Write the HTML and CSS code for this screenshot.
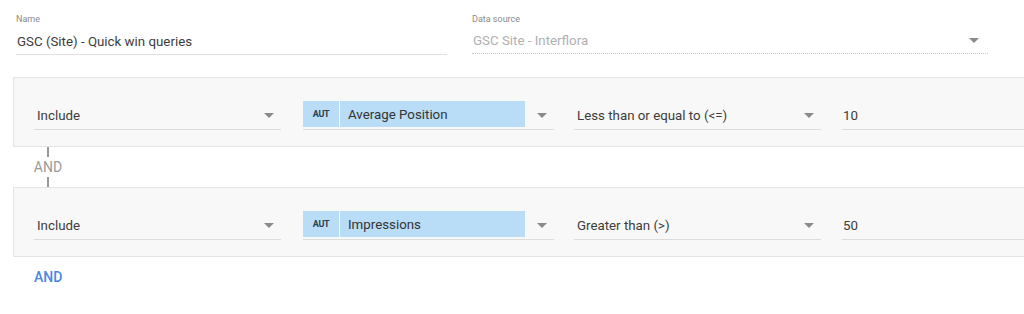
FILE: index.html
```html
<!DOCTYPE html>
<html lang="en">
<head>
    <meta charset="UTF-8">
    <title>Filter editor</title>
    <link rel="stylesheet" href="styles.css">
</head>
<body>
    <div class="header">
        <div class="field name-field">
            <div class="field-label">Name</div>
            <div class="field-value">GSC (Site) - Quick win queries</div>
        </div>
        <div class="field source-field">
            <div class="field-label">Data source</div>
            <div class="field-value disabled">
                <span>GSC Site - Interflora</span>
                <span class="arrow"></span>
            </div>
        </div>
    </div>

    <div class="clause">
        <div class="select mode"><span>Include</span><span class="arrow"></span></div>
        <div class="select dimension">
            <span class="chip"><span class="chip-type">AUT</span><span class="chip-name">Average Position</span></span>
            <span class="arrow"></span>
        </div>
        <div class="select operator"><span>Less than or equal to (&lt;=)</span><span class="arrow"></span></div>
        <div class="select value"><span>10</span></div>
    </div>

    <div class="connector">
        <span class="tick"></span>
        <span class="connector-text">AND</span>
        <span class="tick"></span>
    </div>

    <div class="clause">
        <div class="select mode"><span>Include</span><span class="arrow"></span></div>
        <div class="select dimension">
            <span class="chip"><span class="chip-type">AUT</span><span class="chip-name">Impressions</span></span>
            <span class="arrow"></span>
        </div>
        <div class="select operator"><span>Greater than (&gt;)</span><span class="arrow"></span></div>
        <div class="select value"><span>50</span></div>
    </div>

    <div class="add-and">AND</div>
</body>
</html>
```

FILE: styles.css
```css
body {
    font-family: Roboto, "Noto Sans", sans-serif;
    background-color: #fff;
    color: #3c3c3c;
    margin: 0;
    padding: 0;
    overflow: hidden;
}

.header {
    display: flex;
    padding: 13px 0 0 16px;
}

.field-label {
    font-size: 9px;
    color: #8a8a8a;
    height: 12px;
    line-height: 12px;
}

.field-value {
    display: flex;
    align-items: center;
    justify-content: space-between;
    height: 30px;
    padding-top: 3px;
    font-size: 13.3px;
    padding-left: 1px;
    border-bottom: 1px solid #e0e0e0;
    box-sizing: border-box;
}

.name-field {
    width: 431px;
}

.source-field {
    width: 516px;
    margin-left: 25px;
}

.field-value.disabled {
    color: #b0b0b0;
    border-bottom: 1px dotted #c8c8c8;
    height: 29px;
}

.field-value.disabled .arrow {
    margin-right: 9px;
}

.arrow {
    width: 0;
    height: 0;
    border-left: 5px solid transparent;
    border-right: 5px solid transparent;
    border-top: 5px solid #8a8a8a;
}

.clause {
    display: flex;
    margin: 22px -20px 0 13px;
    padding: 23px 0 16px 20px;
    background-color: #f8f8f8;
    border: 1px solid #e4e4e4;
}

.clause + .connector + .clause {
    margin-top: 0;
}

.select {
    display: flex;
    align-items: center;
    justify-content: space-between;
    height: 28px;
    font-size: 13.3px;
    color: #3c3c3c;
    border-bottom: 1px solid #dcdcdc;
    padding-left: 3px;
    box-sizing: content-box;
}

.select .arrow {
    margin-right: 7px;
}

.mode {
    width: 244px;
}

.dimension {
    width: 251px;
    margin-left: 22px;
    padding-left: 0;
}

.operator {
    width: 244px;
    margin-left: 20px;
}

.value {
    flex: 1;
    margin-left: 21px;
    padding-left: 1px;
}

.chip {
    display: flex;
    height: 26px;
    margin-bottom: 2px;
}

.chip-type {
    width: 36px;
    background-color: #b9dcf7;
    font-size: 9px;
    font-weight: bold;
    letter-spacing: -0.3px;
    color: #2c3e50;
    display: flex;
    align-items: center;
    justify-content: center;
    margin-right: 1px;
}

.chip-name {
    width: 177px;
    background-color: #b9dcf7;
    display: flex;
    align-items: center;
    padding-left: 8px;
    color: #333;
}

.connector {
    display: flex;
    flex-direction: column;
    align-items: center;
    width: 28px;
    margin-left: 34px;
    height: 40px;
}

.tick {
    width: 2px;
    height: 10px;
    background-color: #9a9a9a;
}

.connector-text {
    font-size: 14px;
    color: #9a9a9a;
    height: 20px;
    line-height: 20px;
}

.add-and {
    margin: 12px 0 0 34px;
    font-size: 14px;
    font-weight: 500;
    color: #4a86e8;
}
```
